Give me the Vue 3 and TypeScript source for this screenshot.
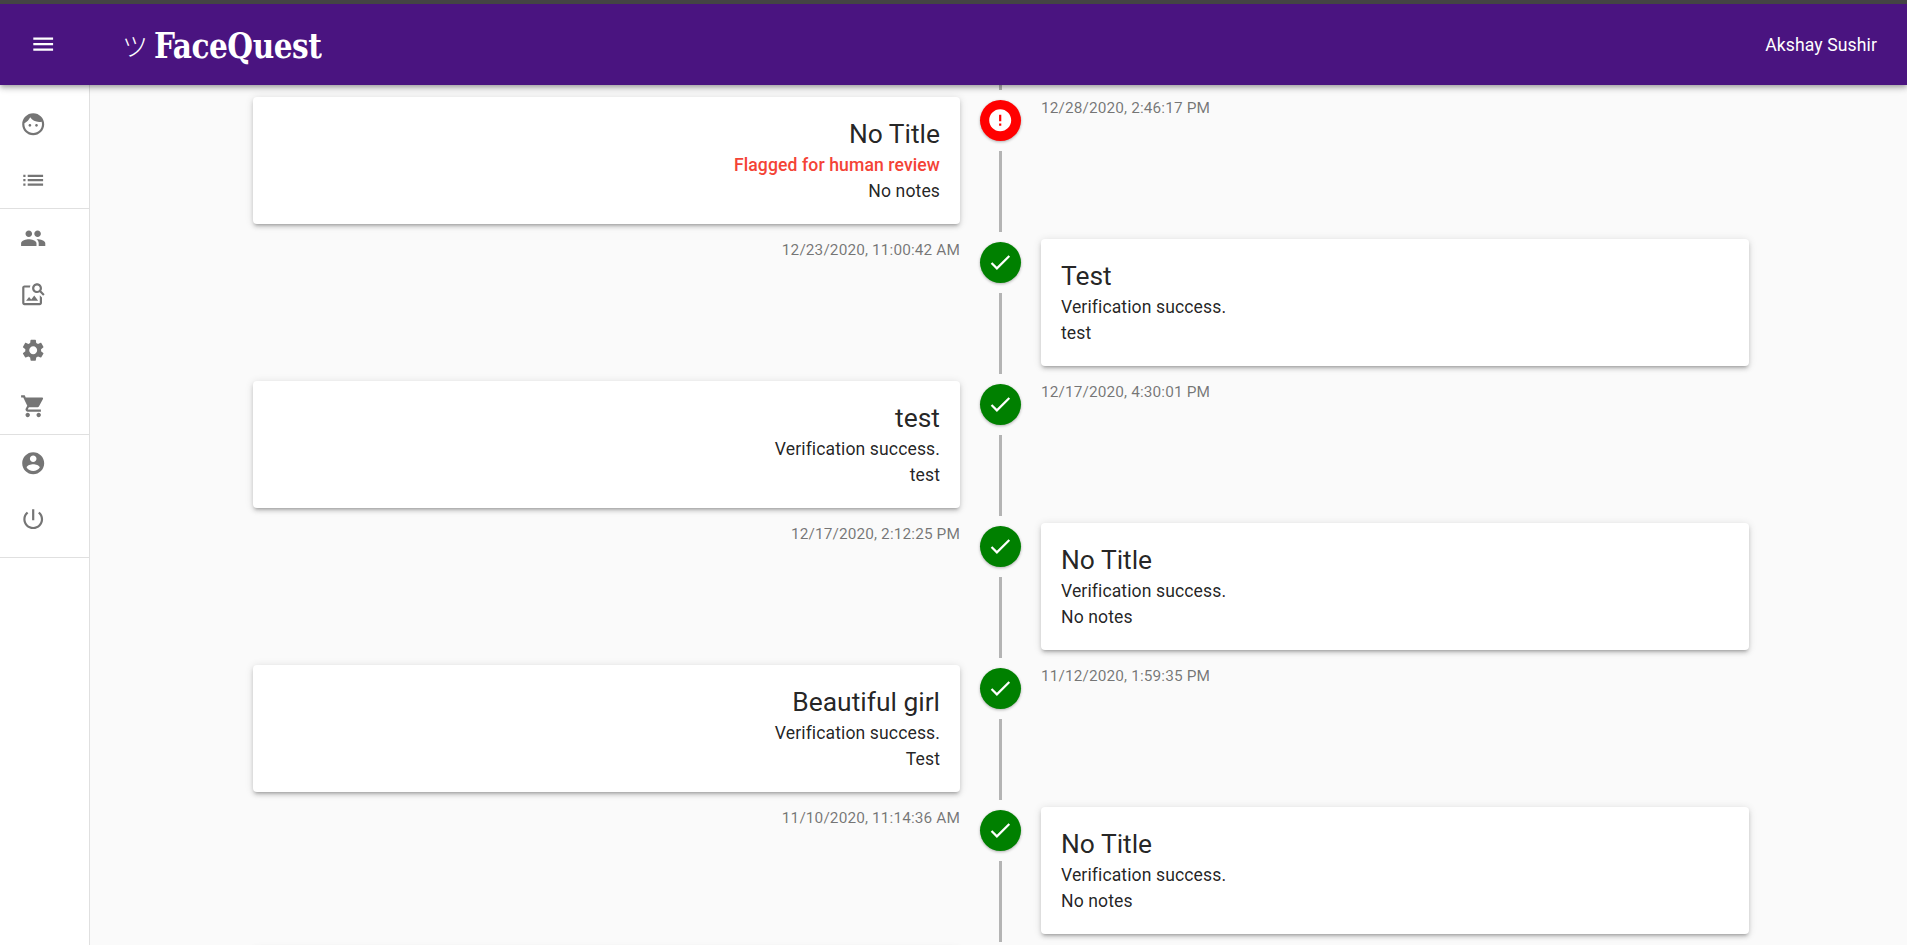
<script setup lang="ts">
type Entry = {
  title: string
  status: string
  notes: string
  time: string
  flagged?: boolean
}

// the last entry only peeks in under the fold, so it has no readable text
const entries: Entry[] = [
  { title: 'No Title', status: 'Flagged for human review', notes: 'No notes', time: '12/28/2020, 2:46:17 PM', flagged: true },
  { title: 'Test', status: 'Verification success.', notes: 'test', time: '12/23/2020, 11:00:42 AM' },
  { title: 'test', status: 'Verification success.', notes: 'test', time: '12/17/2020, 4:30:01 PM' },
  { title: 'No Title', status: 'Verification success.', notes: 'No notes', time: '12/17/2020, 2:12:25 PM' },
  { title: 'Beautiful girl', status: 'Verification success.', notes: 'Test', time: '11/12/2020, 1:59:35 PM' },
  { title: 'No Title', status: 'Verification success.', notes: 'No notes', time: '11/10/2020, 11:14:36 AM' },
  { title: '', status: '', notes: '', time: '' },
]

const navGroups: string[][] = [
  [
    'M9 11.75c-.69 0-1.25.56-1.25 1.25s.56 1.25 1.25 1.25 1.25-.56 1.25-1.25-.56-1.25-1.25-1.25zm6 0c-.69 0-1.25.56-1.25 1.25s.56 1.25 1.25 1.25 1.25-.56 1.25-1.25-.56-1.25-1.25-1.25zM12 2C6.48 2 2 6.48 2 12s4.48 10 10 10 10-4.48 10-10S17.52 2 12 2zm0 18c-4.41 0-8-3.59-8-8 0-.29.02-.58.05-.86 2.36-1.05 4.23-2.98 5.21-5.37C11.07 8.33 14.05 10 17.42 10c.78 0 1.53-.09 2.25-.26.21.71.33 1.47.33 2.26 0 4.41-3.59 8-8 8z',
    'M3 13h2v-2H3v2zm0 4h2v-2H3v2zm0-8h2V7H3v2zm4 4h14v-2H7v2zm0 4h14v-2H7v2zM7 7v2h14V7H7z',
  ],
  [
    'M16 11c1.66 0 2.99-1.34 2.99-3S17.66 5 16 5c-1.66 0-3 1.34-3 3s1.34 3 3 3zm-8 0c1.66 0 2.99-1.34 2.99-3S9.66 5 8 5C6.34 5 5 6.34 5 8s1.34 3 3 3zm0 2c-2.33 0-7 1.17-7 3.5V19h14v-2.5c0-2.33-4.67-3.5-7-3.5zm8 0c-.29 0-.62.02-.97.05 1.16.84 1.97 1.97 1.97 3.45V19h6v-2.5c0-2.33-4.67-3.5-7-3.5z',
    'M18 13v7H4V6h5.02c.05-.71.22-1.38.48-2H4c-1.1 0-2 .9-2 2v14c0 1.1.9 2 2 2h14c1.1 0 2-.9 2-2v-5l-2-2zm-1.5 5h-11l2.75-3.53 1.96 2.36 2.75-3.54zm2.8-9.11c.44-.7.7-1.51.7-2.39C20 4.01 17.99 2 15.5 2S11 4.01 11 6.5s2.01 4.5 4.49 4.5c.88 0 1.7-.26 2.39-.7L21 13.42 22.42 12 19.3 8.89zM15.5 9C14.12 9 13 7.88 13 6.5S14.12 4 15.5 4 18 5.12 18 6.5 16.88 9 15.5 9z',
    'M19.14 12.94c.04-.3.06-.61.06-.94 0-.32-.02-.64-.07-.94l2.03-1.58c.18-.14.23-.41.12-.61l-1.92-3.32c-.12-.22-.37-.29-.59-.22l-2.39.96c-.5-.38-1.03-.7-1.62-.94l-.36-2.54c-.04-.24-.24-.41-.48-.41h-3.84c-.24 0-.43.17-.47.41l-.36 2.54c-.59.24-1.13.57-1.62.94l-2.39-.96c-.22-.08-.47 0-.59.22L2.74 8.87c-.12.21-.08.47.12.61l2.03 1.58c-.05.3-.09.63-.09.94s.02.64.07.94l-2.03 1.58c-.18.14-.23.41-.12.61l1.92 3.32c.12.22.37.29.59.22l2.39-.96c.5.38 1.03.7 1.62.94l.36 2.54c.05.24.24.41.48.41h3.84c.24 0 .44-.17.47-.41l.36-2.54c.59-.24 1.13-.56 1.62-.94l2.39.96c.22.08.47 0 .59-.22l1.92-3.32c.12-.22.07-.47-.12-.61l-2.01-1.58zM12 15.6c-1.98 0-3.6-1.62-3.6-3.6s1.62-3.6 3.6-3.6 3.6 1.62 3.6 3.6-1.62 3.6-3.6 3.6z',
    'M7 18c-1.1 0-1.99.9-1.99 2S5.9 22 7 22s2-.9 2-2-.9-2-2-2zM1 2v2h2l3.6 7.59-1.35 2.45c-.16.28-.25.61-.25.96 0 1.1.9 2 2 2h12v-2H7.42c-.14 0-.25-.11-.25-.25l.03-.12.9-1.63h7.45c.75 0 1.41-.41 1.75-1.03l3.58-6.49c.08-.14.12-.31.12-.48 0-.55-.45-1-1-1H5.21l-.94-2H1zm16 16c-1.1 0-1.99.9-1.99 2s.89 2 1.99 2 2-.9 2-2-.9-2-2-2z',
  ],
  [
    'M12 2C6.48 2 2 6.48 2 12s4.48 10 10 10 10-4.48 10-10S17.52 2 12 2zm0 3c1.66 0 3 1.34 3 3s-1.34 3-3 3-3-1.34-3-3 1.34-3 3-3zm0 14.2c-2.5 0-4.71-1.28-6-3.22.03-1.99 4-3.08 6-3.08 1.99 0 5.97 1.09 6 3.08-1.29 1.94-3.5 3.22-6 3.22z',
    'M13 3h-2v10h2V3zm4.83 2.17l-1.42 1.42C17.99 7.86 19 9.81 19 12c0 3.87-3.13 7-7 7s-7-3.13-7-7c0-2.19 1.01-4.14 2.58-5.42L6.17 5.17C4.23 6.82 3 9.26 3 12c0 4.97 4.03 9 9 9s9-4.03 9-9c0-2.74-1.23-5.18-3.17-6.83z',
  ],
]

const checkPath = 'M9 16.17L4.83 12l-1.42 1.41L9 19 21 7l-1.41-1.41z'
const errorPath =
  'M12 2C6.48 2 2 6.48 2 12s4.48 10 10 10 10-4.48 10-10S17.52 2 12 2zm1 15h-2v-2h2v2zm0-4h-2V7h2v6z'
</script>

<template>
  <div class="page">
    <header class="appbar">
      <div class="menu-btn">
        <svg class="icon" viewBox="0 0 24 24" fill="#fff">
          <path d="M3 18h18v-2H3v2zm0-5h18v-2H3v2zm0-7v2h18V6H3z" />
        </svg>
      </div>
      <div class="logo">
        <span class="logo-mark">ツ</span>
        <span class="logo-name">FaceQuest</span>
      </div>
      <div class="user">Akshay Sushir</div>
    </header>

    <div class="body">
      <nav class="sidebar">
        <div v-for="(group, g) in navGroups" :key="g" class="nav-group">
          <div v-for="path in group" :key="path" class="nav-item">
            <svg class="icon" viewBox="0 0 24 24" fill="#757575"><path :d="path" /></svg>
          </div>
        </div>
      </nav>

      <main class="main">
        <div class="stub"><div class="line"></div></div>
        <div v-for="(entry, i) in entries" :key="i" class="row">
          <div class="side side-left">
            <div v-if="i % 2 === 0" class="card">
              <div class="card-title">{{ entry.title }}</div>
              <div class="card-text" :class="{ flagged: entry.flagged }">{{ entry.status }}</div>
              <div class="card-text">{{ entry.notes }}</div>
            </div>
            <div v-else class="time">{{ entry.time }}</div>
          </div>

          <div class="track">
            <div class="dot" :class="entry.flagged ? 'dot-red' : 'dot-green'">
              <svg class="icon" viewBox="0 0 24 24" fill="#fff">
                <path :d="entry.flagged ? errorPath : checkPath" />
              </svg>
            </div>
            <div class="line"></div>
          </div>

          <div class="side side-right">
            <div v-if="i % 2 === 1" class="card">
              <div class="card-title">{{ entry.title }}</div>
              <div class="card-text" :class="{ flagged: entry.flagged }">{{ entry.status }}</div>
              <div class="card-text">{{ entry.notes }}</div>
            </div>
            <div v-else class="time">{{ entry.time }}</div>
          </div>
        </div>
      </main>
    </div>
  </div>
</template>

<style>
html,
body {
  margin: 0;
  overflow: hidden;
  background: #fafafa;
}
</style>

<style scoped>
.page {
  height: 945px;
  display: flex;
  flex-direction: column;
  overflow: hidden;
  font-family: Roboto, sans-serif;
  background: #fafafa;
  border-top: 4px solid #444;
  box-sizing: border-box;
}

.icon {
  width: 26.4px;
  height: 26.4px;
  display: block;
}

.appbar {
  flex: 0 0 81px;
  display: flex;
  align-items: center;
  background: #4a1480;
  color: #fff;
  position: relative;
  z-index: 2;
  box-shadow: 0 2px 4px -1px rgba(0, 0, 0, 0.2), 0 4px 5px 0 rgba(0, 0, 0, 0.14), 0 1px 10px 0 rgba(0, 0, 0, 0.12);
}

.menu-btn {
  width: 86px;
  display: flex;
  justify-content: center;
}

.logo {
  margin-left: 36px;
  display: flex;
  align-items: center;
  gap: 6px;
}

.logo-mark {
  font-family: "Noto Sans CJK JP", sans-serif;
  font-weight: 300;
  font-size: 26px;
  line-height: 1;
}

.logo-name {
  font-family: "DejaVu Serif Condensed", "DejaVu Serif", serif;
  font-weight: 700;
  font-stretch: condensed;
  font-size: 36px;
  line-height: 1;
  letter-spacing: -0.5px;
  transform: scaleX(0.913);
  transform-origin: left center;
}

.user {
  margin-left: auto;
  margin-right: 30px;
  font-size: 17.6px;
  font-weight: 400;
  letter-spacing: 0.1px;
}

.body {
  flex: 1;
  display: flex;
  min-height: 0;
}

.sidebar {
  width: 89px;
  flex: none;
  background: #fff;
  border-right: 1px solid #e0e0e0;
}

.nav-group {
  border-bottom: 1px solid #e0e0e0;
}

.nav-group:first-child {
  padding-top: 11px;
}

.nav-group:nth-child(2) {
  padding-top: 1px;
}

.nav-group:last-child {
  padding-bottom: 10px;
}

.nav-item {
  height: 56px;
  display: flex;
  align-items: center;
  padding-left: 19.8px;
}

.main {
  flex: 1;
  min-width: 0;
  padding-left: 163px;
}

.stub {
  height: 12px;
  margin-left: 707px;
  position: relative;
}

.stub .line {
  position: absolute;
  left: 39px;
  top: 0;
  height: 5px;
}

.row {
  display: grid;
  grid-template-columns: 707px 81px 708px;
  height: 142px;
}

.side {
  min-width: 0;
}

.side-left {
  text-align: right;
}

.track {
  display: flex;
  flex-direction: column;
  align-items: center;
  padding: 3px 0 7px;
  box-sizing: border-box;
}

.dot {
  width: 41px;
  height: 41px;
  flex: none;
  border-radius: 50%;
  display: flex;
  align-items: center;
  justify-content: center;
  margin-bottom: 10px;
  box-shadow: 0 1px 3px rgba(0, 0, 0, 0.3);
}

.dot-green {
  background: #008000;
}

.dot-red {
  background: #ff0000;
}

.line {
  width: 3px;
  flex: 1;
  background: #b4b4b4;
}

.card {
  height: 127px;
  box-sizing: border-box;
  padding: 21px 20px 0;
  background: #fff;
  border-radius: 4px;
  box-shadow: 0 3px 3px -2px rgba(0, 0, 0, 0.2), 0 3px 4px 0 rgba(0, 0, 0, 0.14), 0 1px 8px 0 rgba(0, 0, 0, 0.12);
}

.card-title {
  font-size: 26.4px;
  line-height: 32px;
  color: rgba(0, 0, 0, 0.87);
  margin-bottom: 2px;
}

.card-text {
  font-size: 17.6px;
  line-height: 26px;
  letter-spacing: 0.1px;
  color: rgba(0, 0, 0, 0.87);
}

.flagged {
  color: #f44336;
  font-weight: 500;
}

.time {
  font-size: 15.4px;
  line-height: 22px;
  letter-spacing: 0.12px;
  color: rgba(0, 0, 0, 0.54);
}
</style>
